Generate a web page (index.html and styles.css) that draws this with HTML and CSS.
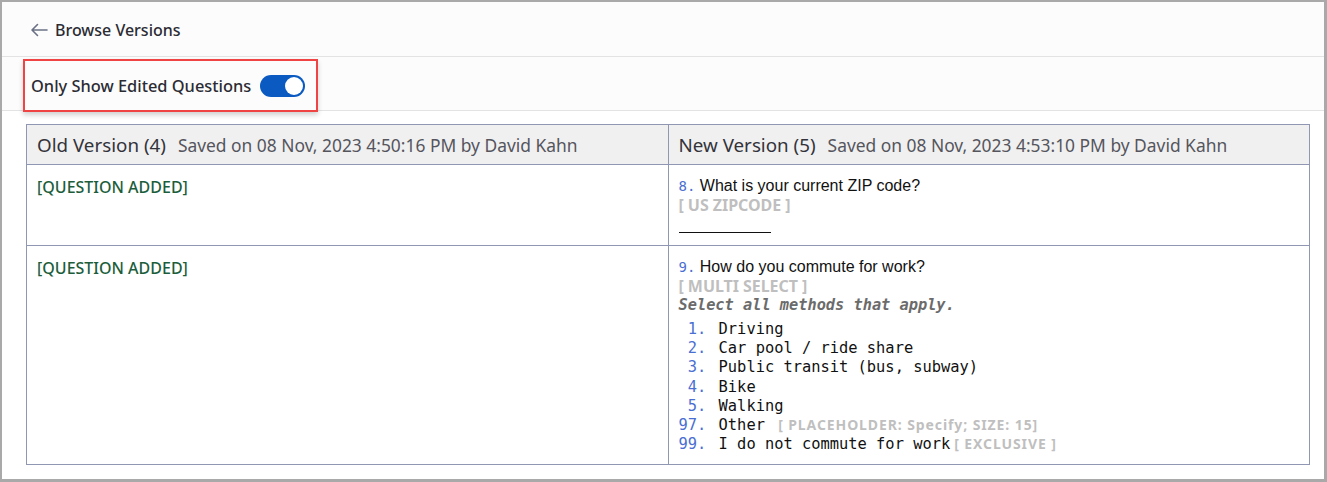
FILE: index.html
```html
<!DOCTYPE html>
<html lang="en">
<head>
  <meta charset="UTF-8">
  <meta name="viewport" content="width=device-width, initial-scale=1.0">
  <title>Browse Versions</title>
  <link rel="stylesheet" href="styles.css">
</head>
<body>
  <div id="frame">
    <div class="topbar">
      <svg class="back" width="18" height="14" viewBox="0 0 18 14">
        <path d="M17 7H2M7.5 1.5L2 7l5.5 5.5" fill="none" stroke="#6b7185" stroke-width="1.6" stroke-linecap="round" stroke-linejoin="round"/>
      </svg>
      <span class="title">Browse Versions</span>
    </div>
    <div class="filterbar">
      <div class="highlight">
        <span class="label">Only Show Edited Questions</span>
        <span class="toggle"><span class="knob"></span></span>
      </div>
    </div>
    <div class="content">
      <table class="compare">
        <tr>
          <th><span class="ver">Old Version (4)</span><span class="saved">Saved on 08 Nov, 2023 4:50:16 PM by David Kahn</span></th>
          <th><span class="ver">New Version (5)</span><span class="saved">Saved on 08 Nov, 2023 4:53:10 PM by David Kahn</span></th>
        </tr>
        <tr class="row1">
          <td><span class="added">[QUESTION ADDED]</span></td>
          <td>
            <div class="q"><span class="num">8.</span> What is your current ZIP code?</div>
            <div class="tag">[ US ZIPCODE ]</div>
            <div class="blank"></div>
          </td>
        </tr>
        <tr class="row2">
          <td><span class="added">[QUESTION ADDED]</span></td>
          <td>
            <div class="q"><span class="num">9.</span> How do you commute for work?</div>
            <div class="tag">[ MULTI SELECT ]</div>
            <div class="hint">Select all methods that apply.</div>
            <ul class="opts">
              <li><span class="num"> 1.</span> Driving</li>
              <li><span class="num"> 2.</span> Car pool / ride share</li>
              <li><span class="num"> 3.</span> Public transit (bus, subway)</li>
              <li><span class="num"> 4.</span> Bike</li>
              <li><span class="num"> 5.</span> Walking</li>
              <li><span class="num">97.</span> Other <span class="tag inl">[ PLACEHOLDER: Specify; SIZE: 15]</span></li>
              <li><span class="num">99.</span> I do not commute for work<span class="tag inl">[ EXCLUSIVE ]</span></li>
            </ul>
          </td>
        </tr>
      </table>
    </div>
  </div>
</body>
</html>
```

FILE: styles.css
```css
* {
  margin: 0;
  padding: 0;
  box-sizing: border-box;
  list-style: none;
}
body {
  font-family: "Noto Sans", "Open Sans", sans-serif;
  color: #2b2b33;
  background: #fff;
}
#frame {
  width: 1327px;
  height: 482px;
  border-style: solid;
  border-color: #a9a9a9;
  border-width: 2px 3px 3px 2px;
  background: #fff;
}
.topbar {
  height: 55px;
  background: #fcfcfc;
  border-bottom: 1px solid #e3e3e3;
  display: flex;
  align-items: center;
  padding-left: 28px;
  padding-top: 2px;
}
.back {
  margin-right: 7px;
}
.title {
  font-size: 16px;
  font-weight: 500;
}
.filterbar {
  height: 54px;
  background: #fcfcfc;
  border-bottom: 1px solid #e3e3e3;
  position: relative;
}
.highlight {
  position: absolute;
  left: 21px;
  top: 2px;
  width: 295px;
  height: 53px;
  border: 2px solid #f04444;
  box-shadow: 0 3px 5px rgba(0, 0, 0, 0.18);
  display: flex;
  align-items: center;
  padding-left: 6px;
}
.label {
  font-size: 16.4px;
  font-weight: 500;
}
.toggle {
  margin-left: 9px;
  width: 45px;
  height: 22px;
  border-radius: 11px;
  background: #0a5ac2;
  display: flex;
  align-items: center;
  justify-content: flex-end;
  padding-right: 2px;
}
.knob {
  width: 18px;
  height: 18px;
  border-radius: 50%;
  background: #fff;
}
.content {
  padding: 13px 14px 0 24px;
}
.compare {
  width: 100%;
  border-collapse: collapse;
  table-layout: fixed;
}
.compare th,
.compare td {
  border: 1px solid #8f97b3;
  text-align: left;
  vertical-align: top;
  padding: 11px 10px 0 10px;
}
.compare th {
  background: #f0f0f0;
  font-weight: normal;
  height: 40px;
  padding: 0 10px;
  vertical-align: middle;
  white-space: nowrap;
}
.ver {
  font-size: 18.8px;
  color: #33333b;
  margin-right: 12px;
}
.saved {
  font-size: 17.4px;
  color: #55555d;
}
.row1 td {
  height: 81px;
}
.row2 td {
  padding-bottom: 10px;
}
.added {
  font-size: 16px;
  font-weight: 500;
  color: #1c5e3c;
}
.q {
  font-family: "Liberation Sans", Arial, sans-serif;
  font-size: 16px;
  color: #111;
  line-height: 19px;
}
.num {
  font-family: "DejaVu Sans Mono", "Liberation Mono", monospace;
  color: #4a6fd2;
  white-space: pre;
}
.q .num {
  font-size: 14px;
}
.opts .num {
  margin-right: 3px;
}
.tag {
  font-family: "Noto Sans", sans-serif;
  font-size: 16px;
  font-weight: 700;
  color: #bfbfbf;
  line-height: 19px;
  letter-spacing: -0.05px;
}
.tag.inl {
  margin-left: 4px;
  font-size: 14px;
  letter-spacing: 0.9px;
  line-height: 14px;
}
.blank {
  width: 92px;
  border-bottom: 1px solid #111;
  margin-top: 17px;
}
.hint {
  font-family: "DejaVu Sans Mono", "Liberation Mono", monospace;
  font-size: 15.3px;
  font-weight: bold;
  font-style: italic;
  color: #6b6b6b;
  line-height: 19px;
}
.opts {
  margin-top: 5px;
  font-family: "DejaVu Sans Mono", "Liberation Mono", monospace;
  font-size: 15.4px;
  color: #111;
}
.opts li {
  height: 19.2px;
  line-height: 19px;
  white-space: pre;
}
```
